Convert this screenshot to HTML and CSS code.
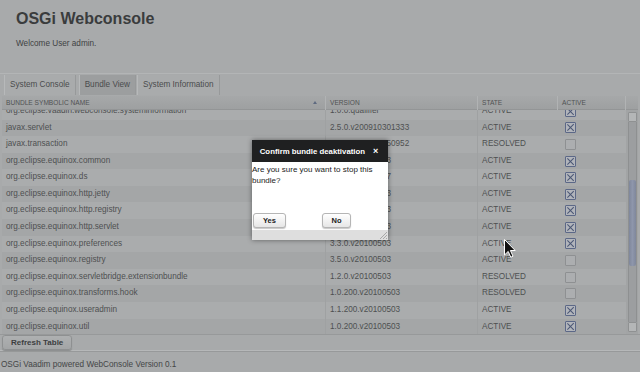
FILE: index.html
```html
<!DOCTYPE html>
<html lang="en">
	<head>
		<meta charset="UTF-8" />
		<meta name="viewport" content="width=device-width, initial-scale=1.0" />
		<title>OSGi Webconsole</title>
		<link rel="stylesheet" href="styles.css">
	</head>
	<body>
		<div class="app">
			<h1 class="title">OSGi Webconsole</h1>
			<p class="welcome">Welcome User admin.</p>

			<!-- Tab sheet -->
			<div class="tabs">
				<div class="tab">System Console</div>
				<div class="tab tab-selected">Bundle View</div>
				<div class="tab">System Information</div>
			</div>

			<!-- Bundle table -->
			<div class="table">
				<div class="thead">
					<div class="th th-name">BUNDLE SYMBOLIC NAME <span class="sort-arrow"></span></div>
					<div class="th">VERSION</div>
					<div class="th">STATE</div>
					<div class="th">ACTIVE</div>
					<div class="th th-corner"></div>
				</div>
				<div class="tbody">
					<div class="rows">
						<div class="rows-inner">
							<div class="row"><div class="td">org.eclipse.vaadin.webconsole.systeminformation</div><div class="td">1.0.0.qualifier</div><div class="td">ACTIVE</div><div class="td"><span class="check checked"></span></div></div>
							<div class="row"><div class="td">javax.servlet</div><div class="td">2.5.0.v200910301333</div><div class="td">ACTIVE</div><div class="td"><span class="check checked"></span></div></div>
							<div class="row"><div class="td">javax.transaction</div><div class="td">1.1.1.v201006150952</div><div class="td">RESOLVED</div><div class="td"><span class="check"></span></div></div>
							<div class="row"><div class="td">org.eclipse.equinox.common</div><div class="td">3.6.0.v20100503</div><div class="td">ACTIVE</div><div class="td"><span class="check checked"></span></div></div>
							<div class="row"><div class="td">org.eclipse.equinox.ds</div><div class="td">1.2.0.v20100507</div><div class="td">ACTIVE</div><div class="td"><span class="check checked"></span></div></div>
							<div class="row"><div class="td">org.eclipse.equinox.http.jetty</div><div class="td">2.0.0.v20100503</div><div class="td">ACTIVE</div><div class="td"><span class="check checked"></span></div></div>
							<div class="row"><div class="td">org.eclipse.equinox.http.registry</div><div class="td">1.1.0.v20100503</div><div class="td">ACTIVE</div><div class="td"><span class="check checked"></span></div></div>
							<div class="row"><div class="td">org.eclipse.equinox.http.servlet</div><div class="td">1.1.0.v20100503</div><div class="td">ACTIVE</div><div class="td"><span class="check checked"></span></div></div>
							<div class="row"><div class="td">org.eclipse.equinox.preferences</div><div class="td">3.3.0.v20100503</div><div class="td">ACTIVE</div><div class="td"><span class="check checked"></span></div></div>
							<div class="row"><div class="td">org.eclipse.equinox.registry</div><div class="td">3.5.0.v20100503</div><div class="td">ACTIVE</div><div class="td"><span class="check"></span></div></div>
							<div class="row"><div class="td">org.eclipse.equinox.servletbridge.extensionbundle</div><div class="td">1.2.0.v20100503</div><div class="td">RESOLVED</div><div class="td"><span class="check"></span></div></div>
							<div class="row"><div class="td">org.eclipse.equinox.transforms.hook</div><div class="td">1.0.200.v20100503</div><div class="td">RESOLVED</div><div class="td"><span class="check"></span></div></div>
							<div class="row"><div class="td">org.eclipse.equinox.useradmin</div><div class="td">1.1.200.v20100503</div><div class="td">ACTIVE</div><div class="td"><span class="check checked"></span></div></div>
							<div class="row"><div class="td">org.eclipse.equinox.util</div><div class="td">1.0.200.v20100503</div><div class="td">ACTIVE</div><div class="td"><span class="check checked"></span></div></div>
						</div>
					</div>
					<div class="scrollbar">
						<div class="scroll-btn"></div>
						<div class="scroll-track">
							<div class="scroll-thumb"></div>
						</div>
						<div class="scroll-btn"></div>
					</div>
				</div>
			</div>

			<div class="toolbar">
				<button class="refresh-btn">Refresh Table</button>
			</div>

			<div class="footer">OSGi Vaadim powered WebConsole Version 0.1</div>
		</div>

		<!-- Modal window -->
		<div class="dialog">
			<div class="dialog-header">
				<span>Confirm bundle deaktivation</span>
				<span class="dialog-close">&times;</span>
			</div>
			<div class="dialog-body">
				<p class="dialog-text">Are you sure you want to stop this bundle?</p>
				<div class="dialog-buttons">
					<button class="dialog-btn btn-yes">Yes</button>
					<button class="dialog-btn btn-no">No</button>
				</div>
			</div>
			<div class="dialog-footer">
				<svg class="resize-grip" viewBox="0 0 8 8">
					<path d="M8 1 L1 8 M8 4 L4 8 M8 7 L7 8" stroke="#9a9a9a" stroke-width="0.8" />
				</svg>
			</div>
		</div>

		<!-- Mouse pointer -->
		<svg class="cursor" viewBox="0 0 12 19">
			<path d="M0.5 0.5 L0.5 16 L4.2 12.4 L6.8 18.2 L9 17.2 L6.4 11.5 L11.2 11.5 Z" fill="#111" stroke="#fff" stroke-width="1" stroke-linejoin="round" />
		</svg>
	</body>
</html>
```

FILE: styles.css
```css
body {
	box-sizing: border-box;
	margin: 0;
	background-color: #a8aaab;
	font-family: "Liberation Sans", Arial, sans-serif;
	color: #4c4e4f;
	overflow: hidden;
}

.app {
	width: 640px;
	height: 372px;
}

.title {
	margin: 0;
	padding: 10px 0 0 16px;
	font-size: 16px;
	line-height: 18px;
	font-weight: 700;
	color: #3a3c3d;
}

.welcome {
	margin: 11px 0 0 16px;
	font-size: 8.2px;
	line-height: 10px;
	color: #404243;
}

.tabs {
	display: flex;
	margin-top: 24px;
	padding: 1px 0 0 4px;
	border-top: 1px solid #b3b5b6;
	box-sizing: border-box;
	height: 23px;
}

.tab {
	padding: 0 5px;
	font-size: 8.2px;
	line-height: 20px;
	height: 20px;
	color: #4a4c4d;
	background-color: #a9abac;
	border-left: 1px solid #b7b9ba;
	border-right: 1px solid #97999a;
	margin-right: 3px;
}

.tab-selected {
	background-color: #9c9e9f;
	margin-right: 1px;
}

.table {
	margin: 0 2px;
}

.thead {
	display: grid;
	grid-template-columns: 324px 152px 80px 68px 12px;
	height: 14px;
	background-image: linear-gradient(to bottom, #a6a8a9, #9ea0a1);
	border-bottom: 1px solid #939596;
	box-sizing: border-box;
}

.th {
	padding-left: 4px;
	font-size: 6.6px;
	line-height: 14px;
	color: #505253;
	border-right: 1px solid #b1b3b4;
	position: relative;
}

.th-corner {
	border-right: none;
}

.sort-arrow {
	position: absolute;
	right: 8px;
	top: 5px;
	border-left: 2px solid transparent;
	border-right: 2px solid transparent;
	border-bottom: 3px solid #5e6a80;
}

.tbody {
	display: flex;
	height: 224px;
}

.rows {
	width: 624px;
	overflow: hidden;
}

.rows-inner {
	margin-top: -7px;
}

.row {
	display: grid;
	grid-template-columns: 324px 152px 80px 68px;
	height: 16.58px;
	background-color: #aaacad;
}

.row:nth-child(even) {
	background-color: #a4a6a7;
}

.td {
	padding-left: 4px;
	font-size: 8.2px;
	line-height: 16.58px;
	color: #4e5051;
	white-space: nowrap;
	display: flex;
	align-items: center;
}

.td:nth-child(1),
.td:nth-child(2) {
	border-right: 1px solid #9fa1a2;
}

.check {
	width: 9px;
	height: 9px;
	margin-left: 3px;
	border: 1px solid #8e9092;
	background-color: #acaeb0;
	border-radius: 1px;
	position: relative;
}

.checked {
	border-color: #5c6887;
	background-color: #b2b5bb;
}

.checked::before,
.checked::after {
	content: "";
	position: absolute;
	left: 4px;
	top: 0;
	width: 1.4px;
	height: 9px;
	background-color: #4a5674;
	transform: rotate(45deg);
}

.checked::after {
	transform: rotate(-45deg);
}

.scrollbar {
	width: 12px;
	display: flex;
	flex-direction: column;
	background-color: #a2a4a5;
	padding: 2px 1px 2px 2px;
	box-sizing: border-box;
}

.scroll-btn {
	height: 8px;
	border: 1px solid #8f9192;
	background-color: #b4b6b7;
	border-radius: 1px;
}

.scroll-track {
	flex: 1;
	background-color: #9c9ea0;
	border-left: 1px solid #8e9091;
	border-right: 1px solid #8e9091;
	padding-top: 58px;
}

.scroll-thumb {
	height: 86px;
	background-image: linear-gradient(to right, #7f879b, #8e96ab, #7f879b);
	border-radius: 2px;
}

.toolbar {
	display: flex;
	align-items: flex-start;
	height: 17px;
	padding: 0 0 0 2px;
	border-top: 1px solid #97999a;
	border-bottom: 1px solid #b6b8b9;
	box-sizing: border-box;
	box-shadow: 0 1px 0 #97999a;
}

.refresh-btn {
	height: 15px;
	padding: 0 8px;
	font-family: "Liberation Sans", Arial, sans-serif;
	font-size: 8px;
	font-weight: 700;
	color: #3c3e3f;
	background-image: linear-gradient(to bottom, #aeb0b1, #a3a5a6);
	border: 1px solid #8e9091;
	border-radius: 3px;
	box-shadow: 0 1px 1px #8a8c8d;
	outline: none;
}

.footer {
	padding: 9px 0 0 1px;
	font-size: 8.2px;
	line-height: 10px;
	color: #444647;
}

.dialog {
	position: absolute;
	left: 252px;
	top: 140px;
	width: 136px;
	height: 100px;
	display: flex;
	flex-direction: column;
	background-color: #ffffff;
	box-shadow: 0 0 5px rgba(0, 0, 0, 0.45);
}

.dialog-header {
	height: 22px;
	display: flex;
	align-items: center;
	justify-content: center;
	gap: 8px;
	padding-right: 2px;
	background-color: #1f2021;
	color: #ffffff;
	font-size: 7.8px;
	font-weight: 700;
}

.dialog-close {
	font-size: 9px;
}

.dialog-body {
	height: 68px;
	display: flex;
	flex-direction: column;
	padding-bottom: 2px;
	box-sizing: border-box;
}

.dialog-text {
	margin: 2px 0 0 0;
	font-size: 8px;
	line-height: 11px;
	color: #222222;
}

.dialog-buttons {
	display: flex;
	margin-top: auto;
}

.dialog-btn {
	height: 15px;
	padding: 0;
	font-family: "Liberation Sans", Arial, sans-serif;
	font-size: 7.5px;
	font-weight: 700;
	color: #222222;
	background-image: linear-gradient(to bottom, #ffffff, #e6e6e6);
	border: 1px solid #b5b5b5;
	border-radius: 3px;
	box-shadow: 0 1px 1px #c8c8c8;
	outline: none;
}

.btn-yes {
	width: 33px;
	margin-left: 1px;
}

.btn-no {
	width: 29px;
	margin-left: 36px;
}

.dialog-footer {
	flex: 1;
	display: flex;
	justify-content: flex-end;
	align-items: flex-end;
	background-color: #dedede;
}

.resize-grip {
	width: 8px;
	height: 8px;
	margin: 0 1px 1px 0;
}

.cursor {
	position: absolute;
	left: 504px;
	top: 239px;
	width: 12px;
	height: 19px;
}
```
